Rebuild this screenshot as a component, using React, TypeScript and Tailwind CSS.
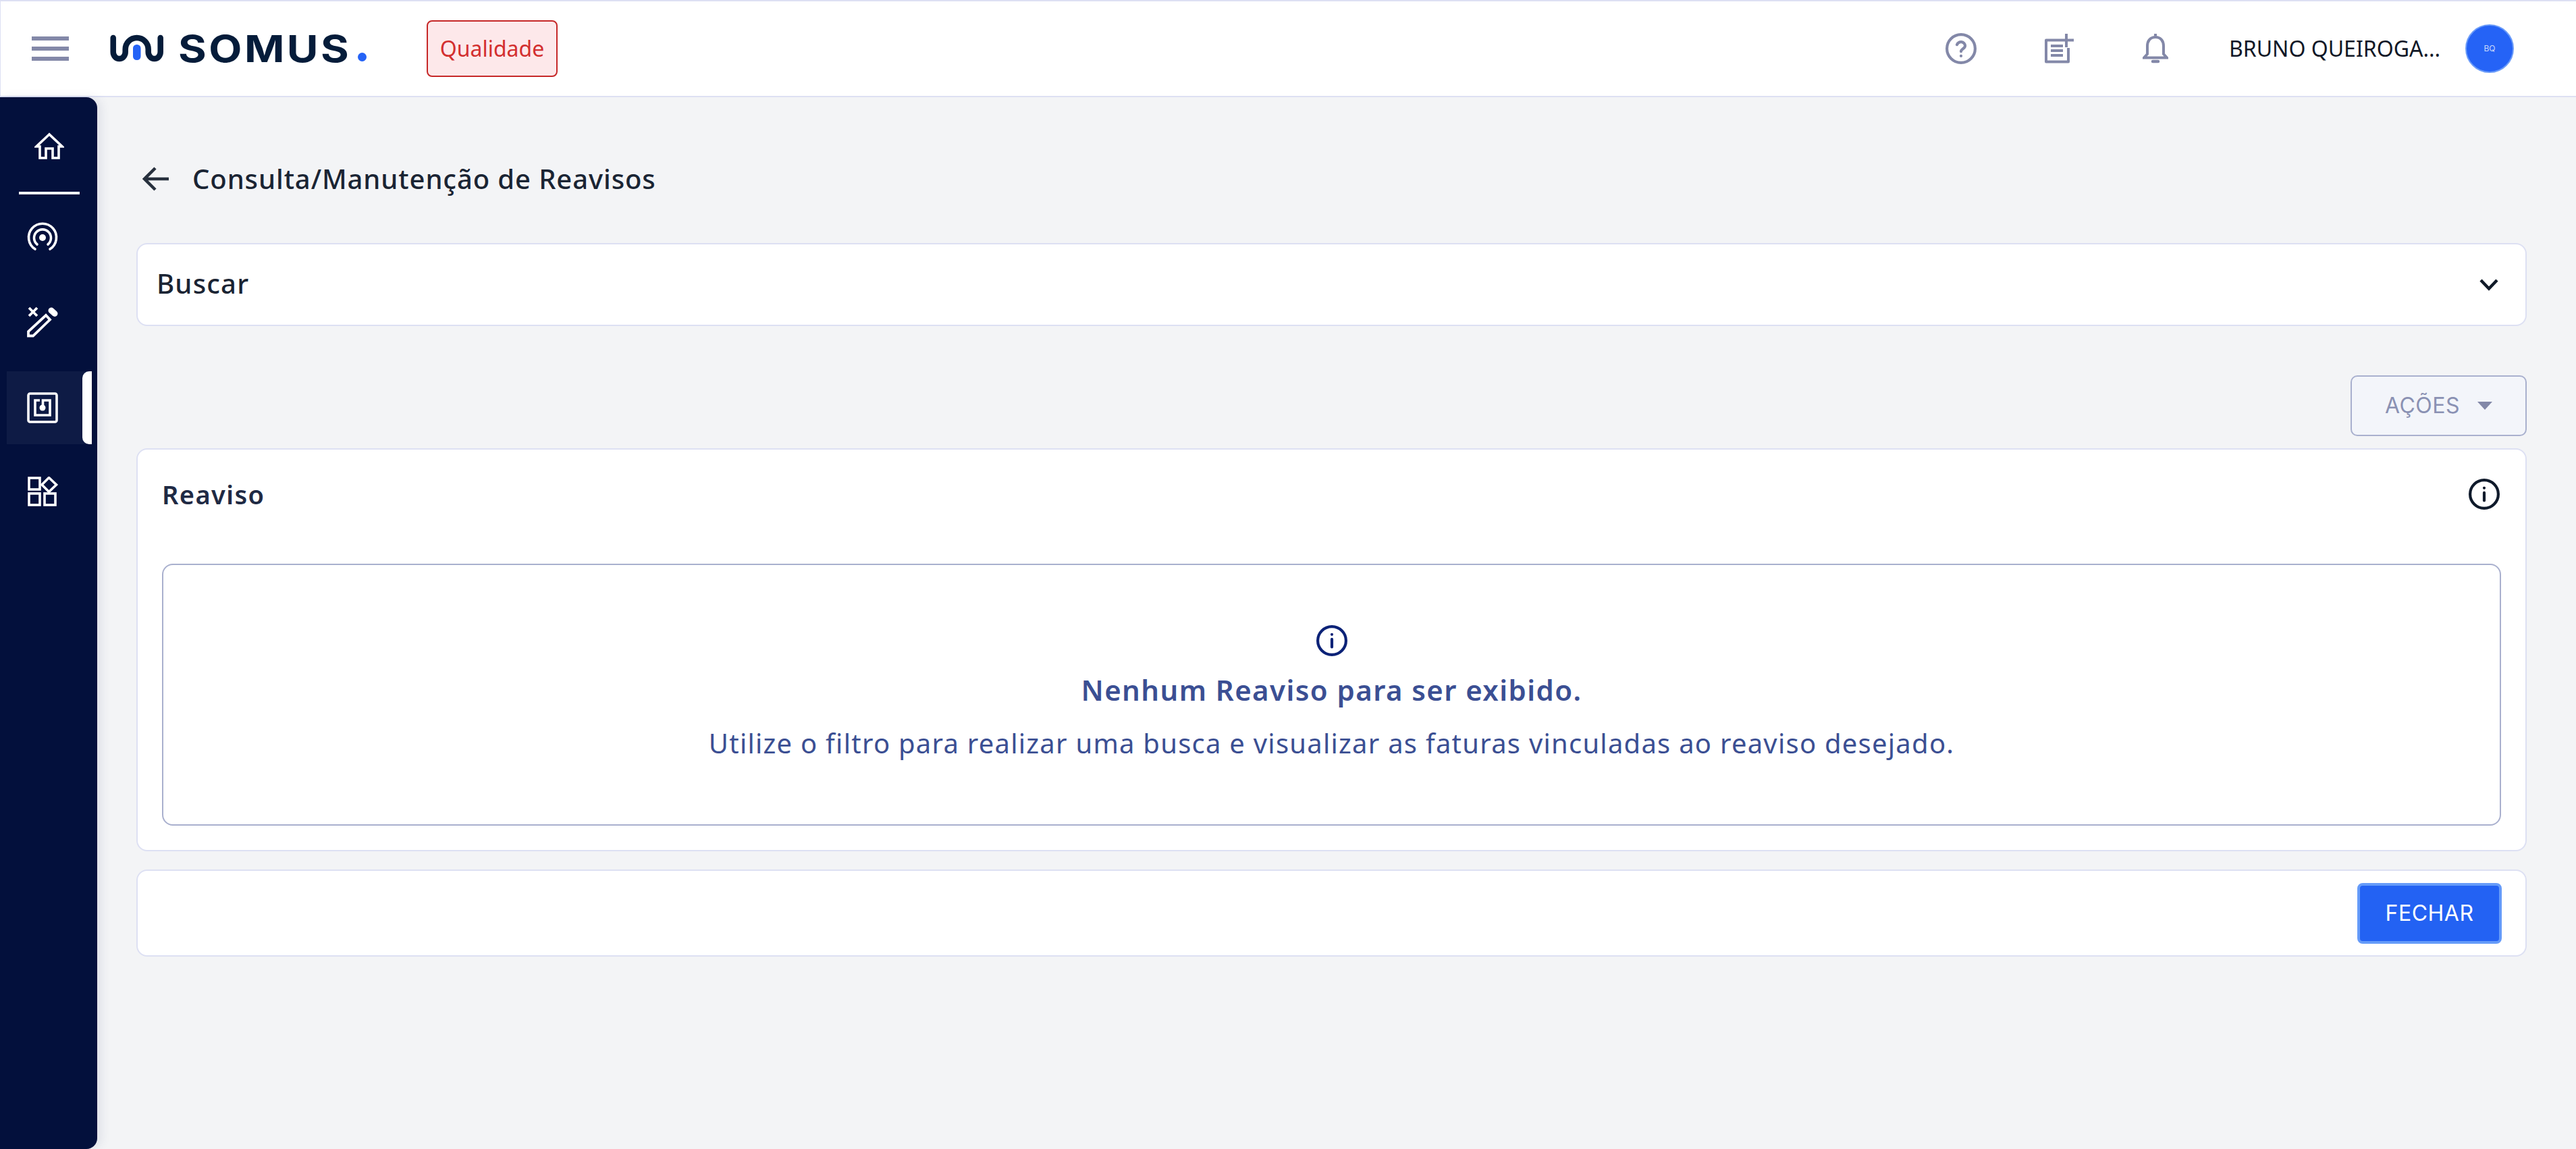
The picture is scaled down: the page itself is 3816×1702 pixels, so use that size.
import React from "react";

const plex = "font-['Noto_Sans','Liberation_Sans',sans-serif]";
const inter = "font-['Inter','Liberation_Sans',sans-serif]";

function Logo() {
  return (
    <div className="flex h-[44px] w-[380px] shrink-0 items-center">
      <svg width="80" height="44" viewBox="0 0 80 44" className="shrink-0" aria-hidden="true">
        <path
          d="M4.7 6 V27 A9 10 0 0 0 22.7 27 V23 A17 17 0 0 1 56.7 23 V27 A9 10 0 0 0 74.7 27 V6"
          fill="none"
          stroke="#051c3a"
          strokeWidth="8.5"
          strokeLinecap="round"
        />
        <rect x="34" y="16" width="11.5" height="23" rx="5.5" fill="#2563f6" />
      </svg>
      <span className={`ml-[21px] origin-left scale-x-[1.16] text-[55px] font-bold leading-none tracking-[3px] text-[#051c3a] ${inter}`}>SOMUS</span>
      <span className="ml-auto mt-[24px] h-[13px] w-[13px] rounded-full bg-[#2563f6]" />
    </div>
  );
}

function InfoIcon({ color, className }: { color: string; className: string }) {
  return (
    <svg viewBox="1 1 22 22" fill="none" stroke={color} strokeWidth="2" strokeLinecap="round" className={className}>
      <circle cx="12" cy="12" r="10" />
      <path d="M12 16.5v-5.5M12 7.6v.01" />
    </svg>
  );
}

function HomeIcon() {
  return (
    <svg width="44" height="40" viewBox="0 0 44 40" fill="none" stroke="#fff" strokeWidth="3.6">
      <path d="M22 3 L3 21 H8 V38 H17 V24 H27 V38 H36 V21 H41 Z" />
    </svg>
  );
}
function SignalIcon() {
  return (
    <svg width="48" height="48" viewBox="0 0 48 48" fill="none" stroke="#fff" strokeWidth="3.6" strokeLinecap="round">
      <path d="M13 41 A20.5 20.5 0 1 1 35 41" />
      <path d="M16 34 A12.5 12.5 0 1 1 32 34" />
      <circle cx="24" cy="24" r="5" fill="#fff" stroke="none" />
    </svg>
  );
}
function WandIcon() {
  return (
    <svg width="46" height="46" viewBox="0 0 46 46" fill="none" stroke="#fff" strokeWidth="3.8">
      <path d="M2 43.5 V37 L28 13 L34 19.5 L9 43.5 Z" />
      <path d="M3 2 L15 14 M15 2 L3 14" />
      <path d="M36 6 L41 10.5" strokeWidth="9" strokeLinecap="round" />
    </svg>
  );
}
function NfcIcon() {
  return (
    <svg width="46" height="46" viewBox="0 0 46 46" fill="none" stroke="#fff">
      <rect x="2" y="2" width="42" height="42" rx="2.5" strokeWidth="3.6" />
      <path d="M19 12 H12 V34 H34 V12 H23.5 V23" strokeWidth="3.6" />
      <circle cx="23" cy="23" r="4.5" fill="#fff" stroke="none" />
    </svg>
  );
}
function AppsIcon() {
  return (
    <svg width="46" height="44" viewBox="0 0 46 44" fill="none" stroke="#fff" strokeWidth="3.6">
      <rect x="2" y="2" width="16" height="17" />
      <rect x="2" y="25" width="16" height="17" />
      <rect x="25" y="25" width="16" height="17" />
      <path d="M31.5 1.5 L42.5 12 L31.5 22.5 L21 12 Z" />
    </svg>
  );
}
function HelpIcon() {
  return (
    <svg viewBox="1 1 22 22" width="46" height="46" fill="none" stroke="#8388a8" strokeWidth="2" strokeLinecap="round">
      <circle cx="12" cy="12" r="10" />
      <path d="M9.1 9.2a3 3 0 0 1 5.8 .8c0 2-2.9 2.2-2.9 4M12 17.2v.01" />
    </svg>
  );
}
function NoteIcon() {
  return (
    <svg width="44" height="44" viewBox="0 0 44 44" fill="none" stroke="#8388a8" strokeWidth="4" strokeLinejoin="round">
      <path d="M22 9.5 H3 V41.5 H36 V21" />
      <path d="M33 0 V20 M22 9.5 H44" />
      <path d="M10 18 H28 M10 25 H28 M10 32 H28" strokeWidth="4" />
    </svg>
  );
}
function BellIcon() {
  return (
    <svg width="38" height="44" viewBox="0 0 38 44" fill="none" stroke="#8388a8" strokeWidth="4">
      <path d="M19 5 C11 5 7 11 7 18 V30 L2 35.5 H36 L31 30 V18 C31 11 27 5 19 5 Z" />
      <path d="M19 0 V6" strokeWidth="4" />
      <path d="M15 41 H23" strokeWidth="4.5" strokeLinecap="round" />
    </svg>
  );
}

function Header() {
  return (
    <header className={`flex h-[144px] shrink-0 items-center border-t-2 border-b-2 border-l border-[#dde0f3] bg-white ${plex}`}>
      <div className="ml-[46px] flex w-[55px] flex-col gap-[9px]">
        <span className="h-[6px] bg-[#8388a8]" />
        <span className="h-[6px] bg-[#8388a8]" />
        <span className="h-[6px] bg-[#8388a8]" />
      </div>
      <div className="ml-[61px]"><Logo /></div>
      <div className="ml-[89px] flex h-[84px] w-[194px] items-center justify-center rounded-[8px] border-2 border-[#c62828] bg-[#fde8ea] text-[32px] text-[#d32f2f]">
        Qualidade
      </div>
      <div className="ml-auto flex items-center">
        <HelpIcon />
        <div className="ml-[100px]"><NoteIcon /></div>
        <div className="ml-[102px]"><BellIcon /></div>
        <span className="ml-[90px] w-[312px] whitespace-nowrap text-[32px] text-[#111827]">BRUNO QUEIROGA...</span>
        <div className={`ml-[38px] mr-[92px] flex h-[72px] w-[72px] items-center justify-center rounded-full border-2 border-[#6b9cf9] bg-[#2563f6] text-[12px] text-[#c9d8fb] ${inter}`}>
          BQ
        </div>
      </div>
    </header>
  );
}

function Sidebar() {
  return (
    <aside className="relative z-10 flex w-[144px] shrink-0 flex-col rounded-r-[16px] bg-[#03103c] shadow-[6px_0_14px_rgba(60,70,120,0.10)]">
      <div className="ml-[28px] flex h-[144px] w-[90px] flex-col items-center border-b-4 border-white pt-[52px]"><HomeIcon /></div>
      <div className="ml-[39px] mt-[40px] w-[48px]"><SignalIcon /></div>
      <div className="ml-[40px] mt-[78px] w-[46px]"><WandIcon /></div>
      <div className="relative ml-[10px] mt-[50px] flex h-[108px] w-[126px] items-center bg-[#0e1b45] pl-[30px]">
        <NfcIcon />
        <span className="absolute right-0 top-0 h-full w-[14px] rounded-l-[10px] bg-white" />
      </div>
      <div className="ml-[41px] mt-[48px]"><AppsIcon /></div>
    </aside>
  );
}

const card = "rounded-[16px] border-2 border-[#dde0f3] bg-white";

export default function App() {
  return (
    <div className={`flex h-[1702px] w-[3816px] flex-col overflow-hidden bg-[#f3f4f6] ${plex}`}>
      <Header />
      <div className="flex min-h-0 flex-1">
        <Sidebar />
        <main className="flex-1 pl-[58px] pr-[73px] pt-[91px]">
          <div className="flex h-[60px] items-center">
            <svg width="40" height="36" viewBox="0 0 40 36" fill="none" stroke="#27303d" strokeWidth="4.5" className="ml-[9px]">
              <path d="M19 2 L3 18 L19 34 M3 18 H39" />
            </svg>
            <h1 className="ml-[34px] text-[40px] font-medium tracking-[0.9px] text-[#1a2433]">Consulta/Manutenção de Reavisos</h1>
          </div>

          <section className={`${card} mt-[65px] flex h-[123px] items-center justify-between pl-[28px] pr-[40px]`}>
            <span className="pb-[3px] text-[40px] font-medium tracking-[1.2px] text-[#1a2433]">Buscar</span>
            <svg width="28" height="20" viewBox="0 0 28 20" fill="none" stroke="#101a28" strokeWidth="4.5">
              <path d="M2 3 L14 15.5 L26 3" />
            </svg>
          </section>

          <div className="mt-[73px] flex justify-end">
            <button className={`flex h-[90px] w-[261px] items-center justify-center gap-[26px] rounded-[10px] border-2 border-[#a9b0ce] bg-[#f3f5fa] text-[32px] tracking-[0.5px] text-[#8a91b3] ${inter}`}>
              AÇÕES
              <span className="h-0 w-0 border-x-[11px] border-t-[12px] border-x-transparent border-t-[#8388a8]" />
            </button>
          </div>

          <section className={`${card} mt-[18px] h-[597px] px-[36px] pt-[41px]`}>
            <div className="flex h-[50px] items-center justify-between pr-[2px]">
              <h2 className="text-[38px] font-semibold tracking-[1.4px] text-[#1f2a44]">Reaviso</h2>
              <InfoIcon color="#0f1a2b" className="h-[46px] w-[46px]" />
            </div>
            <div className="mt-[78px] flex h-[388px] flex-col items-center rounded-[16px] border-2 border-[#a9b0ce] bg-white pt-[89px] text-[#3b4f93]">
              <InfoIcon color="#0b2277" className="h-[46px] w-[46px]" />
              <h3 className="mt-[22px] text-[42px] font-semibold leading-[56px] tracking-[1.4px]">Nenhum Reaviso para ser exibido.</h3>
              <p className="mt-[24px] text-[40px] leading-[54px] tracking-[1.24px]">Utilize o filtro para realizar uma busca e visualizar as faturas vinculadas ao reaviso desejado.</p>
            </div>
          </section>

          <section className={`${card} mt-[27px] flex h-[129px] items-center justify-end pr-[35px]`}>
            <button className={`flex h-[90px] w-[214px] items-center justify-center rounded-[8px] border-4 border-[#659bf9] bg-[#2362f3] text-[32px] tracking-[0.5px] text-white ${inter}`}>
              FECHAR
            </button>
          </section>
        </main>
      </div>
    </div>
  );
}
